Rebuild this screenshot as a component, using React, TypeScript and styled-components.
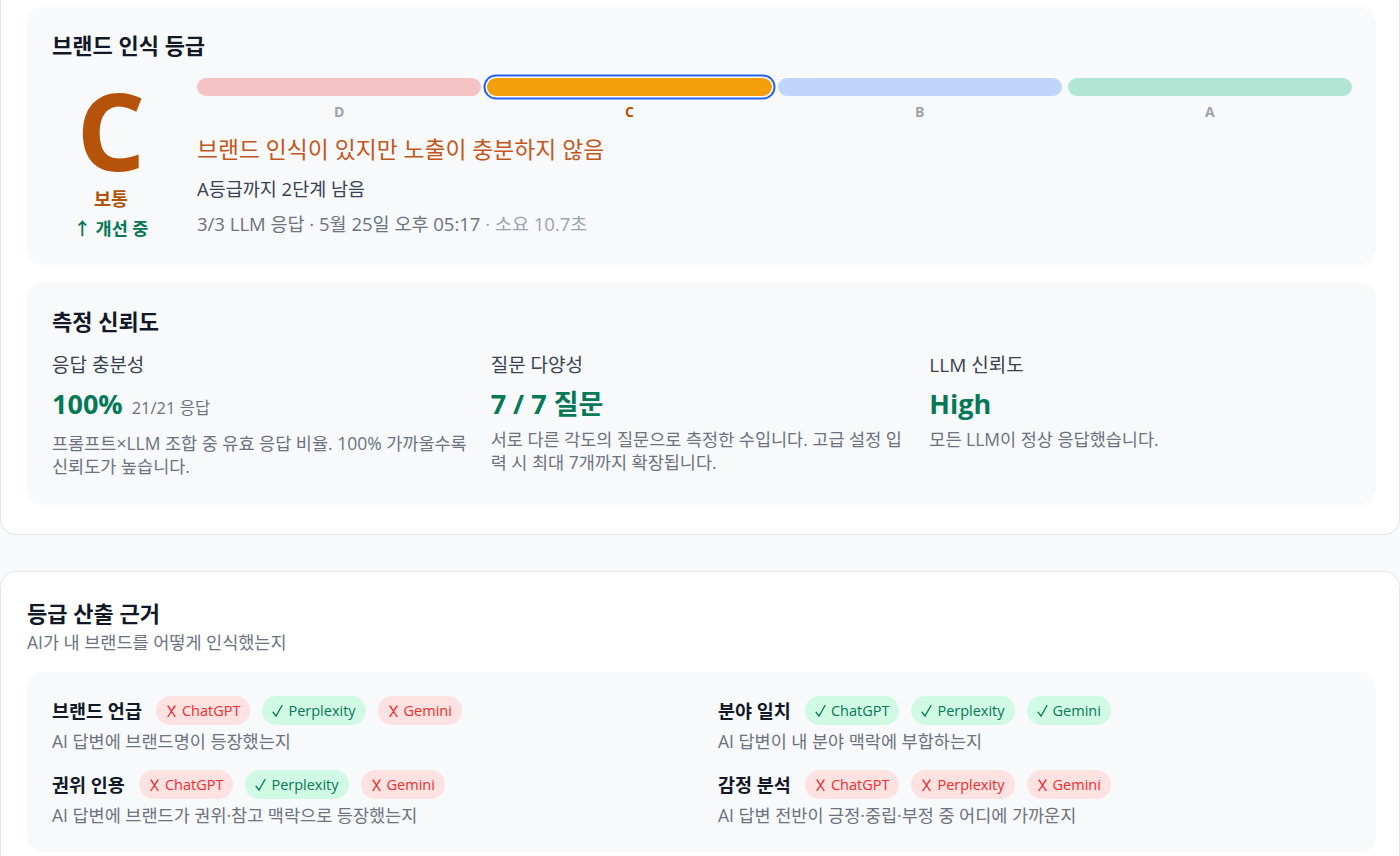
import React from 'react';
import styled, {createGlobalStyle} from 'styled-components';

const GlobalStyle = createGlobalStyle`
  html, body {
    margin: 0;
    padding: 0;
    background: #f8f9fb;
  }
  body {
    font-family: "Open Sans", "Noto Sans CJK KR", sans-serif;
    color: #111827;
  }
`;

const Page = styled.div`
  display: flex;
  flex-direction: column;
  gap: 36px;
  width: 1400px;
`;

const Card = styled.section<{$clipped?: boolean}>`
  background: #fff;
  border: 1px solid #e3e6eb;
  border-radius: 16px;
  padding: 27px 23px 29px 26px;
  display: flex;
  flex-direction: column;
  gap: 18px;
  ${p => p.$clipped && `
    border-top: none;
    border-top-left-radius: 0;
    border-top-right-radius: 0;
    padding-top: 7px;
  `}
`;

const Panel = styled.div<{$bottom?: number}>`
  background: #f8f9fb;
  border-radius: 16px;
  padding: 24px 24px ${p => p.$bottom ?? 27}px 25px;
`;

const PanelTitle = styled.h3`
  margin: 0 0 16px;
  font-size: 22px;
  line-height: 28px;
  font-weight: 700;
  color: #111827;
`;

const GradeRow = styled.div`
  display: flex;
  gap: 27px;
`;

const GradeBlock = styled.div`
  width: 118px;
  display: flex;
  flex-direction: column;
  align-items: center;
  padding-top: 3px;
`;

const BigGrade = styled.div`
  font-size: 108px;
  line-height: 104px;
  font-weight: 700;
  color: #b45309;
`;

const GradeWord = styled.div`
  margin-top: 4px;
  font-size: 18.5px;
  line-height: 26px;
  font-weight: 700;
  color: #b45309;
`;

const Trend = styled.div`
  margin-top: 3px;
  font-size: 17.5px;
  line-height: 26px;
  font-weight: 600;
  color: #047857;
`;

const GradeInfo = styled.div`
  flex: 1;
  display: flex;
  flex-direction: column;
`;

const Scale = styled.div`
  display: grid;
  grid-template-columns: repeat(4, 1fr);
  gap: 6px;
  padding-top: 3px;
`;

const Step = styled.div`
  display: flex;
  flex-direction: column;
  align-items: center;
  gap: 6px;
`;

const Segment = styled.div<{$color: string; $active?: boolean}>`
  width: 100%;
  height: 18px;
  border-radius: 9px;
  background: ${p => p.$color};
  box-shadow: ${p => p.$active ? '0 0 0 1.5px #fff, 0 0 0 3.5px #2563eb' : 'none'};
`;

const StepLabel = styled.div<{$active?: boolean}>`
  font-size: 14px;
  line-height: 20px;
  font-weight: 700;
  color: ${p => p.$active ? '#b45309' : '#9ca3af'};
`;

const Headline = styled.div`
  margin-top: 13px;
  font-size: 22.8px;
  line-height: 30px;
  color: #c4561a;
`;

const Remaining = styled.div`
  margin-top: 11px;
  font-size: 18.5px;
  line-height: 26px;
  color: #374151;
`;

const Meta = styled.div`
  margin-top: 9px;
  font-size: 18.5px;
  line-height: 26px;
  color: #6b7280;
`;

const MetaLight = styled.span`
  color: #9ca3af;
`;

const MetricGrid = styled.div`
  display: grid;
  grid-template-columns: repeat(3, 1fr);
  gap: 16px;
`;

const Metric = styled.div`
  display: flex;
  flex-direction: column;
`;

const MetricLabel = styled.div`
  font-size: 19px;
  line-height: 28px;
  color: #374151;
`;

const MetricValue = styled.div`
  margin-top: 7px;
  display: flex;
  align-items: baseline;
  gap: 9px;
  font-size: 27px;
  line-height: 36px;
  font-weight: 700;
  color: #047857;
`;

const MetricSub = styled.span`
  font-size: 16.5px;
  font-weight: 400;
  color: #6b7280;
`;

const MetricDesc = styled.div`
  margin-top: 6px;
  font-size: 17.5px;
  line-height: 23px;
  color: #6b7280;
  word-break: break-all;
`;

const SectionHead = styled.div`
  display: flex;
  flex-direction: column;
  gap: 3px;
`;

const SectionTitle = styled.h2`
  margin: 0;
  font-size: 22px;
  line-height: 28px;
  font-weight: 700;
  color: #111827;
`;

const SectionSub = styled.div`
  font-size: 17.5px;
  line-height: 24px;
  color: #6b7280;
`;

const CriteriaGrid = styled.div`
  display: grid;
  grid-template-columns: 1fr 1fr;
  column-gap: 32px;
  row-gap: 17px;
`;

const Criterion = styled.div`
  display: flex;
  flex-direction: column;
  gap: 4px;
`;

const CriterionHead = styled.div`
  display: flex;
  align-items: center;
  gap: 12px;
`;

const CriterionName = styled.span`
  margin-right: 2px;
  font-size: 18.5px;
  line-height: 26px;
  font-weight: 700;
  color: #111827;
`;

const Badge = styled.span<{$ok: boolean}>`
  display: inline-flex;
  align-items: center;
  gap: 5px;
  height: 29px;
  padding: 0 10px;
  border-radius: 15px;
  font-size: 14.5px;
  background: ${p => p.$ok ? '#d1fae5' : '#fee2e2'};
  color: ${p => p.$ok ? '#047857' : '#ef2b2b'};
`;

const CriterionDesc = styled.div`
  font-size: 17.5px;
  line-height: 24px;
  color: #6b7280;
`;

const Mark = ({ok}: {ok: boolean}) => (
    <svg width="11" height="14" viewBox="0 0 11 14" fill="none" stroke="currentColor"
         strokeWidth="1.3" strokeLinecap="round">
        {ok
            ? <path d="M1 8.2 L4 12 L10 1.5"/>
            : <path d="M2 2 C4.5 5.5 6.5 9 9 12.5 M9 2 C6.5 5.5 4.5 9 2 12.5"/>}
    </svg>
);

const steps = [
    {label: 'D', color: '#f6c3c4'},
    {label: 'C', color: '#f59e0b', active: true},
    {label: 'B', color: '#bfd6fa'},
    {label: 'A', color: '#b2e6d4'},
];

const metrics = [
    {
        label: '응답 충분성',
        value: '100%',
        sub: '21/21 응답',
        desc: '프롬프트×LLM 조합 중 유효 응답 비율. 100% 가까울수록 신뢰도가 높습니다.',
    },
    {
        label: '질문 다양성',
        value: '7 / 7 질문',
        desc: '서로 다른 각도의 질문으로 측정한 수입니다. 고급 설정 입력 시 최대 7개까지 확장됩니다.',
    },
    {
        label: 'LLM 신뢰도',
        value: 'High',
        desc: '모든 LLM이 정상 응답했습니다.',
    },
];

type Check = [string, boolean];

const criteria: {name: string; desc: string; checks: Check[]}[] = [
    {
        name: '브랜드 언급',
        desc: 'AI 답변에 브랜드명이 등장했는지',
        checks: [['ChatGPT', false], ['Perplexity', true], ['Gemini', false]],
    },
    {
        name: '분야 일치',
        desc: 'AI 답변이 내 분야 맥락에 부합하는지',
        checks: [['ChatGPT', true], ['Perplexity', true], ['Gemini', true]],
    },
    {
        name: '권위 인용',
        desc: 'AI 답변에 브랜드가 권위·참고 맥락으로 등장했는지',
        checks: [['ChatGPT', false], ['Perplexity', true], ['Gemini', false]],
    },
    {
        name: '감정 분석',
        desc: 'AI 답변 전반이 긍정·중립·부정 중 어디에 가까운지',
        checks: [['ChatGPT', false], ['Perplexity', false], ['Gemini', false]],
    },
];

const App = (): JSX.Element => {
    return (
        <>
            <GlobalStyle/>
            <Page>
                <Card $clipped>
                    <Panel $bottom={24}>
                        <PanelTitle>브랜드 인식 등급</PanelTitle>
                        <GradeRow>
                            <GradeBlock>
                                <BigGrade>C</BigGrade>
                                <GradeWord>보통</GradeWord>
                                <Trend>↑ 개선 중</Trend>
                            </GradeBlock>
                            <GradeInfo>
                                <Scale>
                                    {steps.map(s => (
                                        <Step key={s.label}>
                                            <Segment $color={s.color} $active={s.active}/>
                                            <StepLabel $active={s.active}>{s.label}</StepLabel>
                                        </Step>
                                    ))}
                                </Scale>
                                <Headline>브랜드 인식이 있지만 노출이 충분하지 않음</Headline>
                                <Remaining>A등급까지 2단계 남음</Remaining>
                                <Meta>
                                    3/3 LLM 응답 · 5월 25일 오후 05:17 <MetaLight>· 소요 10.7초</MetaLight>
                                </Meta>
                            </GradeInfo>
                        </GradeRow>
                    </Panel>

                    <Panel>
                        <PanelTitle>측정 신뢰도</PanelTitle>
                        <MetricGrid>
                            {metrics.map(m => (
                                <Metric key={m.label}>
                                    <MetricLabel>{m.label}</MetricLabel>
                                    <MetricValue>
                                        {m.value}
                                        {m.sub && <MetricSub>{m.sub}</MetricSub>}
                                    </MetricValue>
                                    <MetricDesc>{m.desc}</MetricDesc>
                                </Metric>
                            ))}
                        </MetricGrid>
                    </Panel>
                </Card>

                <Card>
                    <SectionHead>
                        <SectionTitle>등급 산출 근거</SectionTitle>
                        <SectionSub>AI가 내 브랜드를 어떻게 인식했는지</SectionSub>
                    </SectionHead>
                    <Panel $bottom={25}>
                        <CriteriaGrid>
                            {criteria.map(c => (
                                <Criterion key={c.name}>
                                    <CriterionHead>
                                        <CriterionName>{c.name}</CriterionName>
                                        {c.checks.map(([llm, ok]) => (
                                            <Badge key={llm} $ok={ok}>
                                                <Mark ok={ok}/>
                                                {llm}
                                            </Badge>
                                        ))}
                                    </CriterionHead>
                                    <CriterionDesc>{c.desc}</CriterionDesc>
                                </Criterion>
                            ))}
                        </CriteriaGrid>
                    </Panel>
                </Card>
            </Page>
        </>
    );
}

export default App;
